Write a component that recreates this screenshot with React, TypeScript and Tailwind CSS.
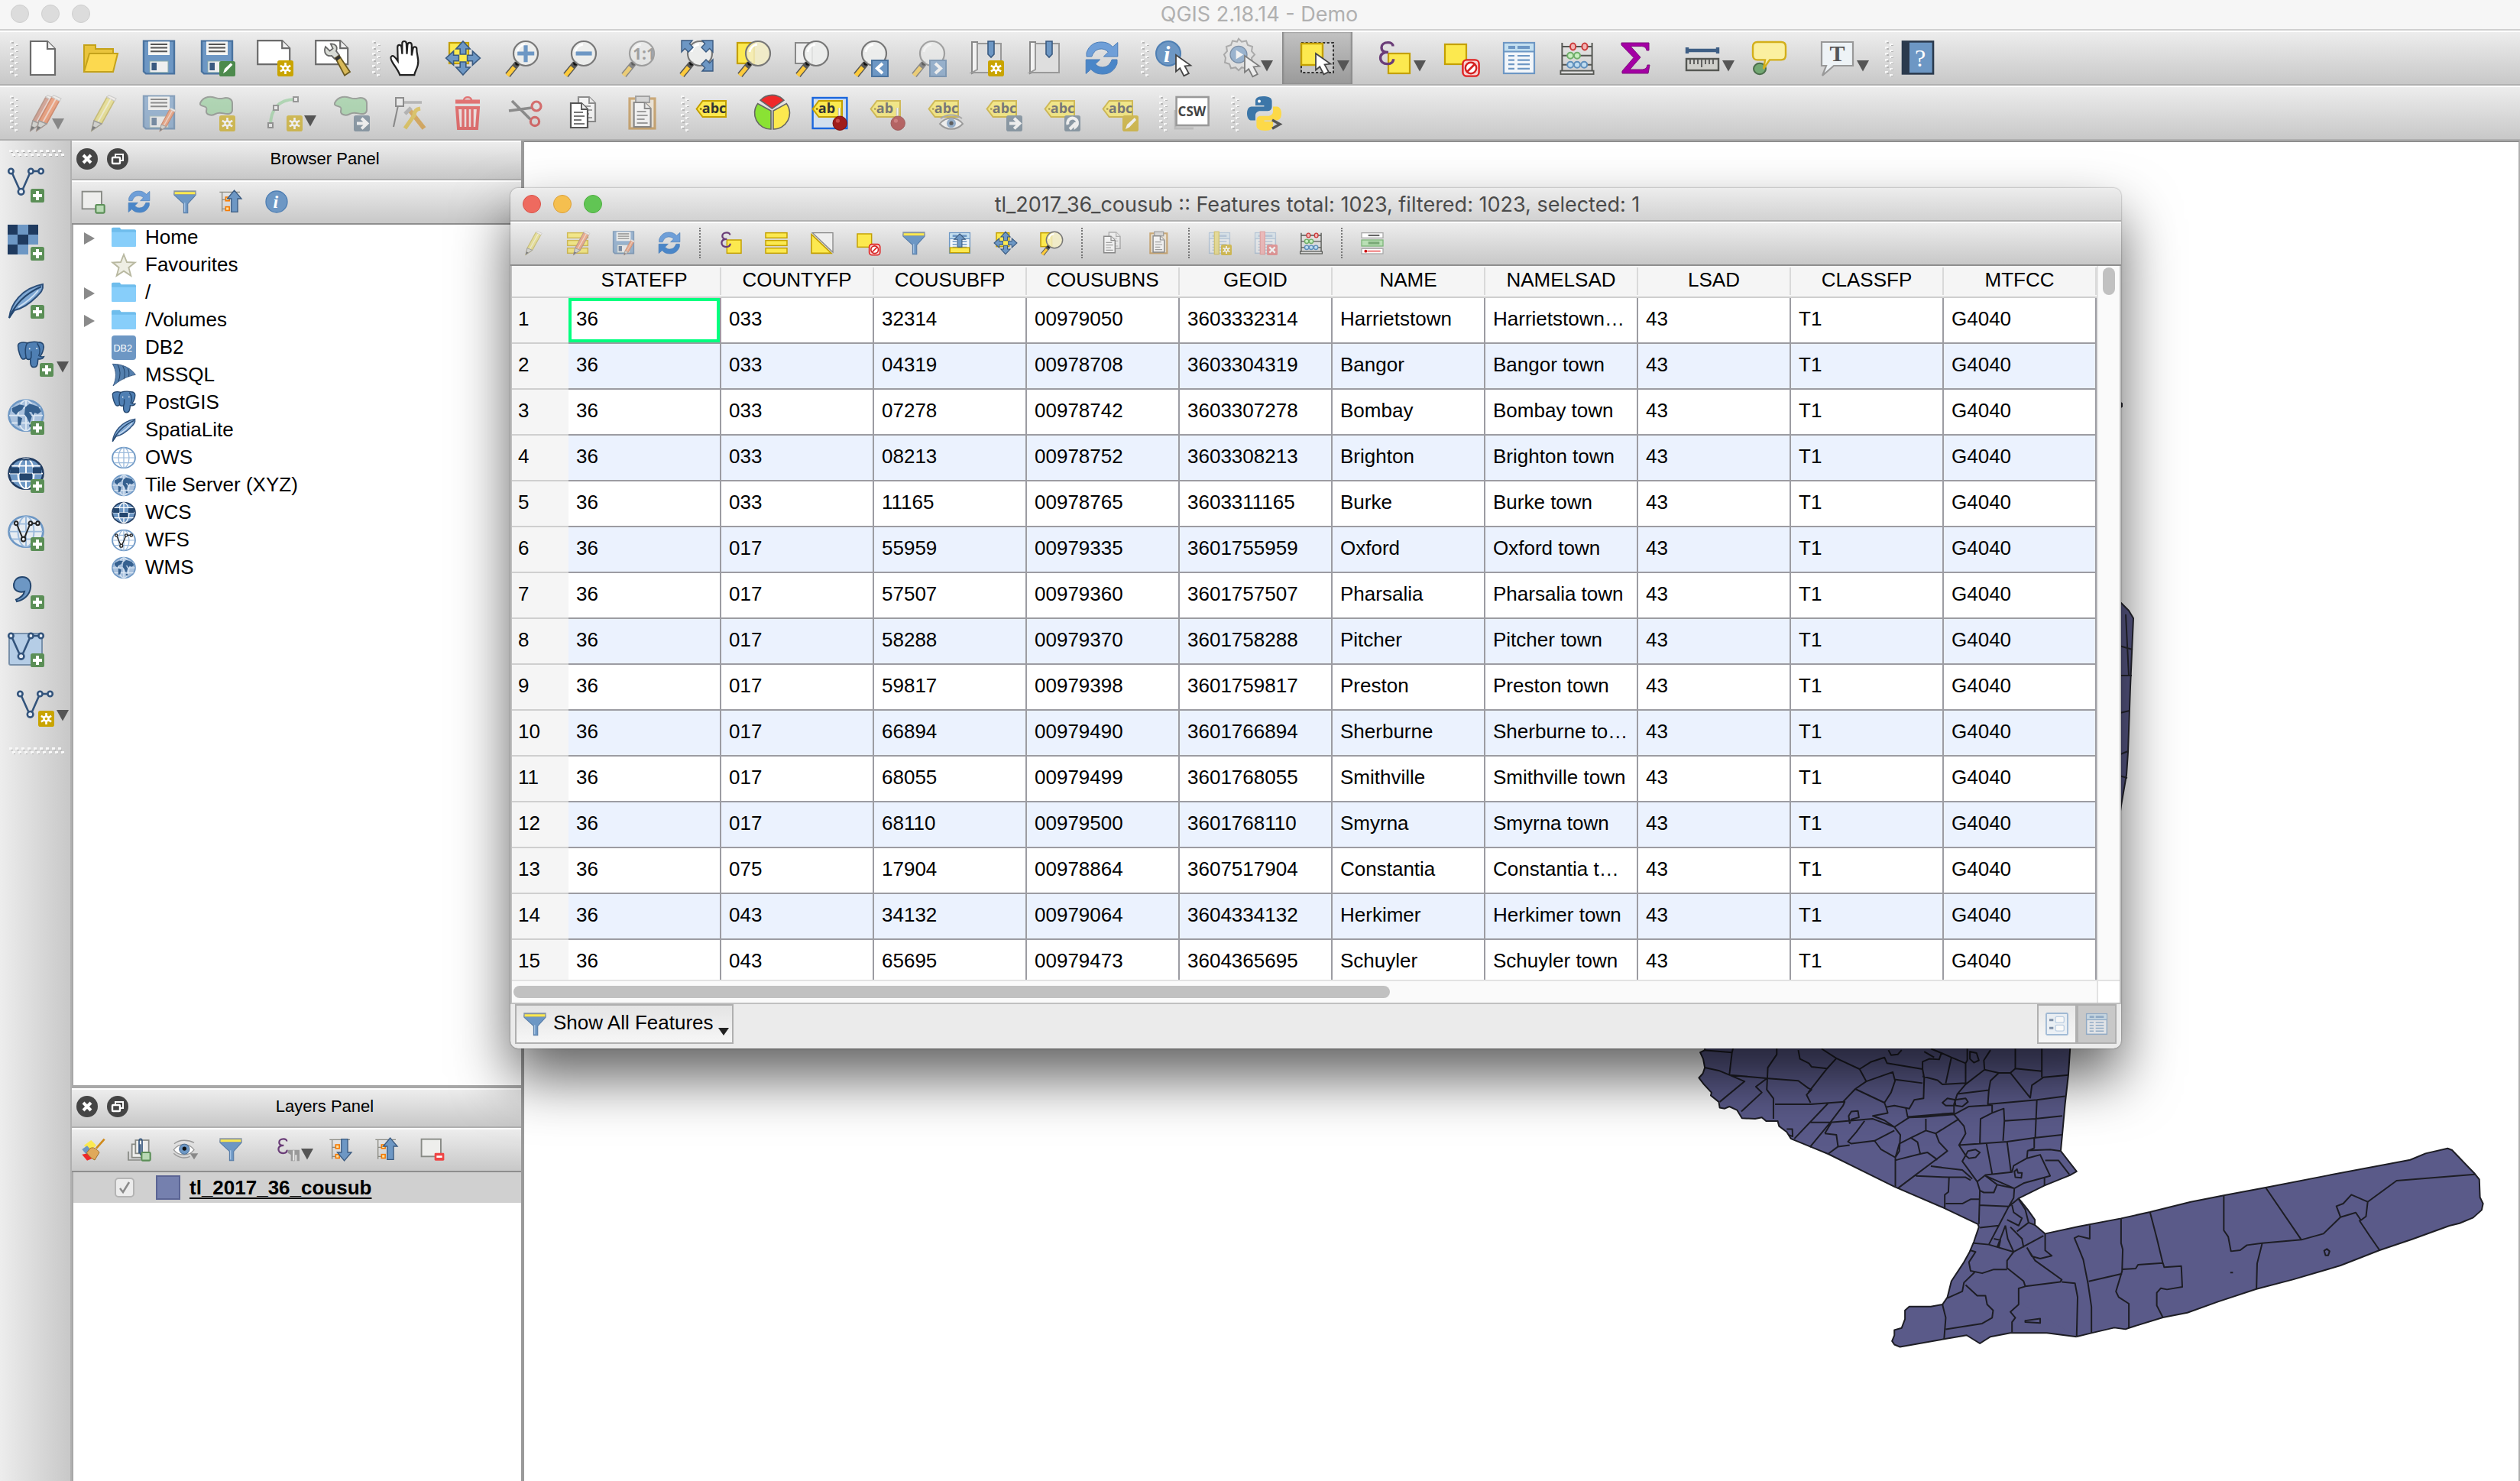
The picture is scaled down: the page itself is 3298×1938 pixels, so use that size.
import React from "react";

type Kids = { children?: React.ReactNode };

/* ---------- icon building blocks, all on a 24-unit grid ---------- */

const STEEL = "#6d97c4";
const NAVY = "#3a5a80";

const Lens = ({ tint = "#eef0ee" }: { tint?: string }) => (
  <g>
    <path d="M9.5 15.5 3.2 23.2" stroke="#555" strokeWidth="4" />
    <path d="M7.5 18 3 23.4" stroke="#fcca3c" strokeWidth="2.6" />
    <circle cx="9.6" cy="15.4" r="1.5" fill="#111" />
    <circle cx="15" cy="9" r="8" fill={tint} fillOpacity=".85" stroke="#777" strokeWidth="1.1" />
    <path d="M9.5 8a6 6 0 0 1 5-5" stroke="#fff" strokeWidth="1.4" fill="none" />
  </g>
);

const Star = ({ x = 13.5, y = 13.5 }: { x?: number; y?: number }) => (
  <g>
    <rect x={x} y={y} width="10.5" height="10.5" rx="1.4" fill="#c9a400" />
    <g stroke="#fff" strokeWidth="1.3">
      <path d={`M${x + 5.25} ${y + 1.5}v7.5M${x + 1.9} ${y + 3.4}l6.7 3.8M${x + 1.9} ${y + 7.2}l6.7-3.8`} />
    </g>
    <circle cx={x + 5.25} cy={y + 5.25} r="2.1" fill="#fff" />
    <circle cx={x + 5.25} cy={y + 5.25} r=".9" fill="#c9a400" />
  </g>
);

const Plus = () => (
  <g>
    <rect x="15" y="14.5" width="9" height="9" rx="1.3" fill="#5b8f57" />
    <path d="M19.5 16v6M16.5 19h6" stroke="#fff" strokeWidth="2" />
  </g>
);

const ArrowBadge = ({ d = "M15.5 18.8h6M18.6 15.4l3.6 3.4-3.6 3.4" }: { d?: string }) => (
  <g>
    <rect x="13.5" y="13.5" width="10.5" height="10.5" rx="1.4" fill="#5a7184" />
    <path d={d} stroke="#fff" strokeWidth="2" fill="none" />
  </g>
);

const Floppy = () => (
  <g>
    <path d="M2 .8h20v21.4H3.5L2 20.8z" fill={STEEL} stroke="#4a739f" strokeWidth="1.2" />
    <rect x="5" y="1.2" width="14" height="8.8" fill="#f5f5f3" />
    <path d="M6.5 3h11M6.5 5.3h11M6.5 7.6h11" stroke="#555" strokeWidth="1" />
    <rect x="6" y="14" width="12" height="7.4" fill="#efefef" stroke="#8aa" strokeWidth=".5" />
    <rect x="7.2" y="15" width="3.3" height="5" fill={NAVY} />
  </g>
);

const Pencil = ({ c = "#e9dd6c", dark = "#b9a83a", x = 0 }: { c?: string; dark?: string; x?: number }) => (
  <g transform={`translate(${x} 0)`}>
    <path d="M4 23.5 5.5 17 14 1.5l5 2.2L10.5 19z" fill={c} stroke={dark} strokeWidth=".8" />
    <path d="M14 1.5 15.2.3l4.8 2.2-1 1.6z" fill="#f6f0ea" stroke="#bbb" strokeWidth=".6" />
    <path d="M8 18 16.5 2.8" stroke="#fff" strokeOpacity=".6" strokeWidth="1" />
    <path d="M4 23.5 5.5 17l5 2z" fill="#cfcfc9" stroke="#777" strokeWidth=".7" />
    <path d="M4 23.5l.7-3 2 .8z" fill="#444" />
  </g>
);

const Cursor = ({ x = 12, y = 10 }: { x?: number; y?: number }) => (
  <path
    transform={`translate(${x} ${y})`}
    d="M0 0v10.8l2.6-2.2 2.6 5 3.2-1.6-2.6-4.8 3.8-.4z"
    fill="#fff"
    stroke="#444"
    strokeWidth=".9"
  />
);

const Nib = ({ children }: Kids) => (
  <g>
    <path d="M.8 9.3 4.8 4H20v10.5H4.8z" fill="#fce94f" stroke="#c4a000" strokeWidth="1" />
    <circle cx="3.6" cy="9.3" r=".7" fill="#8a7400" />
    {children}
  </g>
);

const abc = (t: string) => (
  <text x="4.4" y="12.2" fontSize="9" fontWeight="700" fill="#333" fontFamily="Open Sans, sans-serif">
    {t}
  </text>
);

const Pin = () => (
  <g>
    <path d="M18.2 16.5v-8" stroke="#999" strokeWidth="1.6" />
    <path d="M18.2 14V8.5" stroke="#fff" strokeWidth=".9" />
    <circle cx="18.6" cy="18.6" r="4.6" fill="#a01c1c" stroke="#7c1010" strokeWidth=".5" />
    <circle cx="17.2" cy="17" r="1.3" fill="#c94b4b" />
  </g>
);

const Refresh = () => (
  <g stroke="#4a7db8" strokeWidth=".5">
    <path d="M2 11V8.5C3.6 3.8 7 1.5 11.5 1.5c3.6 0 5.8 1.2 7.6 3.2L22.4 1.8V11h-9.2l3-2.9C14.8 6.6 13.4 6 11.6 6 8.6 6 6.6 7.8 5.4 11z" fill="#6f9fd8" />
    <path d="M22 13v2.5c-1.6 4.7-5 7-9.5 7-3.6 0-5.8-1.2-7.6-3.2L1.6 22.2V13h9.2l-3 2.9c1.4 1.5 2.8 2.1 4.6 2.1 3 0 5-1.8 6.2-5z" fill="#4a86c8" />
  </g>
);

const Globe = ({ fill = "#a9c1dd", line = "#dbe7f3", rim = STEEL }: { fill?: string; line?: string; rim?: string }) => (
  <g fill="none" stroke={line} strokeWidth="1">
    <circle cx="12" cy="12" r="11.2" fill={fill} stroke={rim} strokeWidth="1.4" />
    <ellipse cx="12" cy="12" rx="5.2" ry="11" />
    <path d="M12 1v22M1 12h22M2.6 6.5h18.8M2.6 17.5h18.8" />
  </g>
);

/* Globes are drawn slightly wider than tall. */
const Oblate = ({ children }: Kids) => <g transform="translate(0 1.2) scale(1 .9)">{children}</g>;

const Continents = () => (
  <g fill="#35608f">
    <path d="M3 6.5 8 4l3 .8-1.5 3L7 9.5l-1.5 2L3 9zM6.5 12.5l3 1.5-1 5-1.8.5z" />
    <path d="M11.5 6l3-2.5 5.5 2 2 3.5-2.2 2-2-1-1 2-1.3-2.6-1.6.2 2 3-1.5 5-1.8-4-1.6-2.4z" />
    <circle cx="15" cy="19.5" r="1" />
  </g>
);

const VLine = ({ c = "#33547c" }: { c?: string }) => (
  <g stroke={c} fill="none" strokeWidth="1.3">
    <path d="M3 4.4 7.6 14.6M10 14.6 14.5 4.4M17 3h3.4" />
    <g fill="#e6ecf3">
      <circle cx="2.2" cy="3" r="1.6" />
      <circle cx="8.8" cy="16.4" r="1.9" />
      <circle cx="15.2" cy="3" r="1.6" />
      <circle cx="21.8" cy="3" r="1.6" />
    </g>
  </g>
);

const Feather = () => (
  <g>
    <path d="M1 23C2 14 9 3.5 23 1c.6 4-2 6-4.5 8.5C14.5 13.5 9 17 4.5 18z" fill="#7fa8d4" stroke="#2d4f7a" strokeWidth="1" />
    <path d="M1 23C5 14 11 7.5 22 2.5" fill="none" stroke="#24466e" strokeWidth="1" />
    <path d="M7 16c5-3 9-6 13-11" fill="none" stroke="#cfe0f2" strokeWidth="1" />
  </g>
);

const Elephant = () => (
  <g fill="#4f7fb3" stroke="#24466e" strokeWidth="1">
    <path d="M1 4c0-3 5-3.2 8-2.2C12 .8 16 .6 19 1.2c4 .3 4.8 2.6 3.8 6-.7 2.6-1.6 4.4-2.8 5.4 1 .8 2 .6 3.3.4-.6 1.4-2.6 2.2-5 1.8-.4 2.4.2 6.6-3.4 6.8-3.2.2-3.3-3-3.2-6.8-1.6.8-3 .2-3.8-.8C5 16.5 3.6 14 2.5 11 1.4 8 1 6 1 4z" />
    <path d="M9 1.8C6.8 5 7 9 8 14M17.5 2c3 4 3 7 1.3 10.5M11.7 14.8c1.600-1.800.3-4 .8-6.300" fill="none" />
    <circle cx="11" cy="6.5" r=".6" fill="#fff" stroke="none" />
    <circle cx="17.2" cy="6.3" r=".6" fill="#fff" stroke="none" />
  </g>
);

const Funnel = () => (
  <g>
    <path d="M1.5 3.5h21v2L14.8 14v9h-4V14L1.5 5.5z" fill={STEEL} stroke="#567ba6" strokeWidth=".8" />
    <path d="M1 1h22v4.2H1z" fill="#8794a0" />
    <path d="M2 2.4h20v2.2H2z" fill="#fce94f" />
    <path d="M11.8 13v9" stroke="#a9c6e6" strokeWidth="1" />
  </g>
);

const Tree = ({ up = false }: { up?: boolean }) => (
  <g>
    <path d="M1 2.5h20M3.5 3v18.5M3.5 10h4M3.5 19h4" stroke="#8a8a82" strokeWidth="1" fill="none" />
    <rect x="7" y="7.5" width="3.6" height="3.6" fill="#fce0a0" stroke="#f57900" strokeWidth="1.2" />
    <rect x="7" y="17" width="3.6" height="3.6" fill="#fce0a0" stroke="#f57900" strokeWidth="1.2" />
    <path
      d={up ? "M15.5.8 22.5 9H18.8v13h-6.2V9H8.6z" : "M15.5 23.2 22.5 15H18.8V2h-6.2v13H8.6z"}
      fill={STEEL}
      stroke={NAVY}
      strokeWidth="1"
    />
  </g>
);

const Sheet = () => (
  <g>
    <rect x="2" y="2" width="20" height="20" fill="#f2f6fa" stroke={STEEL} strokeWidth="1.1" />
    <rect x="2.6" y="2.6" width="18.8" height="5" fill="#c3dff0" />
    <path d="M2 7.8h20" stroke={STEEL} />
    <path d="M5 5h4.5M11 5h8" stroke={STEEL} strokeWidth="2" />
    <path d="M5 10.5h4M11 10.5h8M5 13.3h4M11 13.3h8M5 16.1h4M11 16.1h8M5 18.9h4M11 18.9h8" stroke={STEEL} strokeWidth="1.1" />
  </g>
);

const Abacus = () => (
  <g>
    <path d="M2.2 2v19M21.8 2v19M2 4.5h20M2 10.4h20M2 16.4h20" stroke="#555753" strokeWidth="1" fill="none" />
    <rect x="1.2" y="20.3" width="21.6" height="2.2" fill="#ddd" stroke="#555753" strokeWidth=".9" />
    <g fill="#f2b5b5" stroke="#cc3b3b" strokeWidth="1">
      <ellipse cx="9.3" cy="4.5" rx="1.8" ry="2.2" />
      <ellipse cx="17" cy="4.5" rx="1.8" ry="2.2" />
    </g>
    <g fill="#c8efc0" stroke="#6fae69" strokeWidth="1">
      <ellipse cx="7.6" cy="10.4" rx="2" ry="2" />
      <ellipse cx="12" cy="10.4" rx="2" ry="2" />
    </g>
    <g fill="#bfdcf0" stroke="#5f8fbc" strokeWidth="1">
      <ellipse cx="7.6" cy="16.4" rx="2" ry="2" />
      <ellipse cx="12" cy="16.4" rx="2" ry="2" />
      <ellipse cx="16.6" cy="16.4" rx="2" ry="2" />
    </g>
  </g>
);

const Epsilon = () => (
  <path
    d="M11.5 4.2C11.5 2.6 10 1.8 8.3 1.8 5.6 1.8 4 3.3 4 5.2c0 2 1.8 3 4.500 3-3.400 0-5.200 1.300-5.200 3.700 0 2.300 1.800 3.900 4.500 3.900 2.200 0 4-1 4-3.200"
    fill="none"
    stroke="#6a3d78"
    strokeWidth="1.7"
  />
);

const Yellow = ({ x, y, w, h }: { x: number; y: number; w: number; h: number }) => (
  <rect x={x} y={y} width={w} height={h} fill="#fce94f" stroke="#c4a000" strokeWidth="1.1" />
);

const NoEntry = () => (
  <g>
    <rect x="13.2" y="13.2" width="10.6" height="10.6" rx="2.6" fill="#f7d4d4" stroke="#e02020" strokeWidth="1.2" />
    <circle cx="18.5" cy="18.5" r="3.6" fill="#fff" stroke="#d42020" strokeWidth="1.2" />
    <path d="M16 21l5-5" stroke="#d42020" strokeWidth="1.3" />
  </g>
);

const Blob = () => (
  <path
    d="M1 5.5C2.5 2 6 1 9 1.5c3 .6 4 1.6 7 .8 3-.8 6 .3 6 3.2v4.5c0 2.6-3 2.900-5.500 2.200-2.600-.6-4-.6-5.600.4C8.600 14 5 13.200 5 11c0-1.600 1-2.500-1-3.200C2.500 7.300.5 7 1 5.500z"
    fill="#8fcc95"
    stroke="#6d756d"
    strokeWidth="1"
  />
);

const FourArrows = () => (
  <g fill={STEEL} stroke={NAVY} strokeWidth=".8">
    <path d="M12 1l4.6 5h-2.7v3.500h-3.800V6H7.400z" />
    <path d="M12 23l4.600-5h-2.700v-3.500h-3.800V18H7.400z" />
    <path d="M.8 12l5-4.600v2.700h3.400v3.800H5.800v2.700z" />
    <path d="M23.200 12l-5-4.600v2.700h-3.400v3.800h3.400v2.700z" />
  </g>
);

const Page = ({ x = 4, y = 1, w = 16, h = 22 }: { x?: number; y?: number; w?: number; h?: number }) => (
  <g stroke="#6b6b6b" strokeWidth="1.1">
    <path d={`M${x} ${y}h${w - 5}l5 5v${h - 5}h${-w}z`} fill="#fff" />
    <path d={`M${x + w - 5} ${y}v5h5`} fill="#f0f0f0" />
  </g>
);

const Doc = ({ x, y }: { x: number; y: number }) => (
  <g>
    <path d={`M${x} ${y}h7l4 4v12h-11z`} fill="#fff" stroke="#555" strokeWidth="1.1" />
    <path d={`M${x + 7} ${y}v4h4`} fill="#eee" stroke="#555" strokeWidth=".9" />
    <path d={`M${x + 2} ${y + 6}h6M${x + 2} ${y + 8.5}h7M${x + 2} ${y + 11}h5M${x + 2} ${y + 13.5}h7`} stroke="#777" strokeWidth=".9" />
  </g>
);

const Bookmark = () => (
  <g>
    <path d="M3 1.5h3.500v19L3 22z" fill="#f2f2f2" stroke="#888" />
    <path d="M6.500 2.500H22v19H3l3.500-2z" fill="#dedede" stroke="#999" />
    <path d="M13.500 1h4v8.500l-2 2-2-2z" fill={STEEL} stroke={NAVY} strokeWidth=".8" />
  </g>
);

const Column = ({ bar, edge }: { bar: string; edge: string }) => (
  <g>
    <g opacity=".6"><Sheet /></g>
    <rect x="7" y="1" width="4.5" height="22" fill={bar} stroke={edge} strokeWidth="1" />
  </g>
);

const I: Record<string, React.ReactNode> = {
  newFile: <Page />,
  open: (
    <g stroke="#c4a21a" strokeWidth="1">
      <path d="M1 21V3.500h7.500V6H20v4H5z" fill="#e9c43c" />
      <path d="M1 21 4.500 9H23l-3 12z" fill="#fcd94f" />
    </g>
  ),
  save: <Floppy />,
  saveAs: (
    <g>
      <Floppy />
      <rect x="13.5" y="14" width="10.5" height="10" rx="1.3" fill="#4d8a4d" />
      <path d="M16 22l1-3 4-3.800 1.200 1.200L18 20.800z" fill="#fff" />
    </g>
  ),
  newPrint: <g><Page x={0.6} y={0.6} w={21} h={15.5} /><Star /></g>,
  manager: (
    <g>
      <Page x={0.6} y={0.6} w={21} h={15.5} />
      <path d="M7 4.500c-1.500 4 .5 6.600 4 6l2 2 3-2.500-2-2.600c1.200-3-.6-5-3.600-4.700l1.400 3-2 1.600z" fill="#d9dcd6" stroke="#666" strokeWidth=".9" />
      <path d="M13.500 12l2.500-1.500L23 21l-3.500 2.400z" fill="#d8b95a" stroke="#6b5a20" strokeWidth=".9" />
      <path d="M13.200 12.200l2.800-1.900 1 1.600-2.700 2z" fill="#333" />
    </g>
  ),
  hand: (
    <path
      d="M7.500 23c-1-3-3-5.500-4.500-8-1.300-2.200-1.600-4-.8-4.500 1-.7 2.300.6 4 3.200L6 4.500C6 2.500 8.300 2.500 8.600 4.500L9 9V2C9 0 11.600 0 11.700 2L12 9l.4-6c.2-2 2.600-2 2.700 0v7l.8-4.500c.3-1.800 2.500-1.500 2.400.3C18.200 10 20 12 19 16.500 18.500 19 17.200 20.500 16.800 23z"
      transform="translate(1 .5) scale(1.02 .98)"
      fill="#fff"
      stroke="#222"
      strokeWidth="1.1"
    />
  ),
  panSel: <g><Yellow x={3} y={2} w={12.5} h={13.5} /><FourArrows /></g>,
  zoomIn: <g><Lens /><path d="M15 3.600v11M9.600 9h11" stroke={STEEL} strokeWidth="2.6" /></g>,
  zoomOut: <g><Lens /><path d="M9.800 9h10.500" stroke={STEEL} strokeWidth="2.6" /></g>,
  zoomOne: (
    <g>
      <Lens />
      <text x="9" y="12.8" fontSize="10.5" fontWeight="700" fill="#777" fontFamily="Open Sans, sans-serif">1:1</text>
    </g>
  ),
  zoomFull: (
    <g>
      <Lens />
      <g fill={STEEL} stroke={NAVY} strokeWidth=".7">
        <path d="M3 .5h7L8.200 2.600 10.500 5 7.500 8 5.200 5.800 3 8z" />
        <path d="M23.500.5v7.500l-2.200-2.200L19 8l-3-3 2.300-2.400L16.500.5z" />
        <path d="M23.500 20.500h-7l1.800-2.100L16 16l3-3 2.300 2.200 2.200-2.200z" />
      </g>
    </g>
  ),
  zoomSel: <g><Yellow x={1.5} y={2} w={11} h={13.5} /><Lens tint="#f3edc4" /></g>,
  zoomLayer: <g><rect x="1.5" y="2" width="11" height="13.5" fill="#eee" stroke="#888" /><Lens /></g>,
  zoomLast: <g><Lens /><rect x="13.5" y="13.5" width="10.5" height="10.5" fill={STEEL} stroke="#4a739f" /><path d="M20.500 15.500 17 18.800l3.500 3.200" stroke="#fff" strokeWidth="2" fill="none" /></g>,
  zoomNext: <g><Lens /><rect x="13.5" y="13.5" width="10.5" height="10.5" fill={STEEL} stroke="#4a739f" /><path d="M17 15.500l3.500 3.300L17 22" stroke="#fff" strokeWidth="2" fill="none" /></g>,
  newBookmark: <g><Bookmark /><Star /></g>,
  bookmarks: <Bookmark />,
  refresh: <Refresh />,
  identify: (
    <g>
      <circle cx="8.5" cy="9" r="8" fill={STEEL} stroke="#4f7fb3" />
      <text x="5.5" y="14.5" fontSize="15" fontStyle="italic" fontWeight="700" fill="#fff" fontFamily="Liberation Serif, serif">i</text>
      <Cursor x={13.5} y={10} />
    </g>
  ),
  action: (
    <g>
      <path d="M10.500.8l2 2 3-.6 1 2.800 3 1-.5 3 2 2.200-2 2.200.5 3-3 1-1 2.800-3-.6-2 2-2-2-3 .6-1-2.800-3-1 .5-3L1 11.200 3 9l-.5-3 3-1 1-2.800 3 .6z" transform="translate(0 -1.5)" fill="#e4e4e4" stroke="#888" />
      <circle cx="10.5" cy="9.7" r="5.5" fill={STEEL} stroke={NAVY} strokeWidth=".6" />
      <path d="M8.800 6.800v6l4.800-3z" fill="#fff" />
      <Cursor x={14.5} y={10.5} />
    </g>
  ),
  select: (
    <g>
      <rect x="1.5" y="2" width="21" height="19.5" fill="#e4e4e4" fillOpacity=".5" stroke="#333" strokeDasharray="1.6 1.2" />
      <rect x="1.5" y="2.5" width="14" height="14" fill="#fce94f" stroke="#c4a000" strokeWidth="1.2" />
      <Cursor x={11} y={9} />
    </g>
  ),
  selExpr: <g><Yellow x={8.5} y={9} w={14} h={13} /><Epsilon /></g>,
  deselect: <g><Yellow x={1.5} y={3} w={14} h={13} /><NoEntry /></g>,
  table: <Sheet />,
  abacus: <Abacus />,
  sigma: (
    <path d="M3 2h18v5h-1.500C19 5 18 4.300 15.500 4.300H9l6.500 7.200L8.500 19.500h7.500c2.500 0 3.500-1 4-3h1.500L20.500 22H3.500v-1.500l7.500-8.800L3 3.500z" fill="#a400a4" stroke="#7c0f7c" strokeWidth=".5" />
  ),
  measure: (
    <g>
      <path d="M2 7h20M2 5v4M22 5v4" stroke="#3f5f85" strokeWidth="2.2" />
      <rect x="1.5" y="12.5" width="21" height="7.5" fill="#cfcfcb" stroke="#555753" strokeWidth="1.2" />
      <path d="M4 13v3M6.500 13v3M9 13v3M11.500 13v5M14 13v3M16.500 13v3M19 13v3" stroke="#555" strokeWidth=".9" />
    </g>
  ),
  tips: (
    <g>
      <ellipse cx="5.5" cy="19" rx="4" ry="3.6" fill="#73a873" stroke="#4c6e4c" />
      <path d="M4 1.500h15.500c2 0 3 1 3 3V10c0 2-1 3.200-3 3.200H12L8 19l1-5.800H4c-2 0-3-1.200-3-3.200V4.500c0-2 1-3 3-3z" fill="#fbf0a0" stroke="#d3af1a" strokeWidth="1.2" />
    </g>
  ),
  annotation: (
    <g>
      <path d="M2 1.500h20.500V17H10l-7.500 6.500L5 17H2z" fill="#eef3f6" stroke="#999" strokeWidth="1.1" />
      <text x="7.2" y="14.2" fontSize="15" fontWeight="700" fill="#555" fontFamily="Liberation Serif, serif">T</text>
    </g>
  ),
  help: (
    <g>
      <rect x="2" y="1.2" width="20" height="21" fill={STEEL} stroke="#2b3a4d" strokeWidth="1.3" />
      <rect x="2" y="1.2" width="4.5" height="21" fill="#2b3a4d" />
      <text x="10" y="17.5" fontSize="16" fill="#fff" fontFamily="Liberation Serif, serif">?</text>
    </g>
  ),
  pencils: <g><Pencil x={0} c="#c9806a" dark="#a06a55" /><Pencil x={4} c="#ee7c48" dark="#c4572b" /></g>,
  pencil: <Pencil x={2} />,
  saveEdits: <g><Floppy /><g transform="translate(10 8.5) scale(.65)"><Pencil c="#ee8a5a" dark="#c4572b" /></g></g>,
  addFeature: <g><Blob /><Star /></g>,
  addCurve: (
    <g>
      <path d="M3 20C3 10 8 3 19 3" fill="none" stroke="#8fcc95" strokeWidth="2" />
      <g fill="#eee" stroke="#666"><rect x="1.5" y="18.5" width="3" height="3" /><rect x="5" y="7" width="3" height="3" /><rect x="18" y="1.5" width="3" height="3" /></g>
      <Star />
    </g>
  ),
  moveFeature: <g><Blob /><ArrowBadge /></g>,
  nodeTool: (
    <g>
      <path d="M5 5h15" stroke="#999" strokeWidth="1.8" />
      <path d="M4.500 7 1.500 21" stroke="#555" strokeWidth="1" />
      <rect x="3" y="2" width="5" height="5.5" fill="#eee" stroke="#555" />
      <path d="M21.500 22 12 10" stroke="#d08a1a" strokeWidth="3" />
      <path d="M9 22l6-8.500c0-2 1-4 4-4.500" stroke="#d9b424" strokeWidth="2.6" fill="none" />
      <path d="M9 12.500l4-4" stroke="#999" strokeWidth="2.4" />
    </g>
  ),
  trash: (
    <g fill="none" stroke="#e02a2a">
      <path d="M4 4.500h16" strokeWidth="2.6" />
      <path d="M9.500 3.500C9.500 1 14.500 1 14.500 3.500" strokeWidth="1.2" />
      <path d="M5 8.500h14L18 22H6z" strokeWidth="2" fill="#f5dede" />
      <path d="M9 9v12M12 9v12M15 9v12" strokeWidth="1.7" />
    </g>
  ),
  cut: (
    <g fill="none">
      <path d="M1 10.500 16 8.500M3 4l12 12" stroke="#555" strokeWidth="1.8" />
      <circle cx="19" cy="7.5" r="3" stroke="#c22" strokeWidth="1.6" />
      <circle cx="18" cy="17.5" r="2.8" stroke="#c22" strokeWidth="1.6" />
    </g>
  ),
  copy: <g><g opacity=".6"><Doc x={8.5} y={1.5} /></g><Doc x={3.5} y={5.5} /></g>,
  paste: (
    <g>
      <rect x="4" y="2.5" width="16.5" height="19.5" fill="#f0e4cf" stroke="#b98232" strokeWidth="1.6" />
      <rect x="8" y="1" width="9" height="4" fill="#ccc" stroke="#777" />
      <Doc x={6.8} y={5} />
    </g>
  ),
  label: <Nib>{abc("abc")}</Nib>,
  diagram: (
    <g stroke="#666" strokeWidth=".8">
      <path d="M11.500 10.500V22.500A10.500 10.500 0 0 1 2.800 5.800z" fill="#8ae234" />
      <path d="M13 10.500V22.500A10.500 10.500 0 0 0 21.700 5.800z" fill="#fce94f" />
      <path d="M12.250 9 4.500 3.600a10.500 10.500 0 0 1 15.500 0z" fill="#ef2929" />
    </g>
  ),
  pinActive: (
    <g>
      <rect x=".8" y="2" width="22.4" height="20" fill="#d3e0ee" stroke="#1a66dd" strokeWidth="1.2" />
      <Nib>{abc("ab")}<Pin /></Nib>
    </g>
  ),
  pin: <Nib>{abc("ab")}<Pin /></Nib>,
  labelEye: (
    <Nib>
      {abc("abc")}
      <path d="M8 19c4-5 11-5 15 0-4 4.500-11 4.500-15 0z" fill="#fff" stroke="#777" />
      <circle cx="15.5" cy="18.6" r="3" fill={STEEL} />
      <circle cx="15.5" cy="18.6" r="1.3" fill="#111" />
      <path d="M8.500 15.500c4-3 10-3 14 0" stroke="#888" fill="none" />
    </Nib>
  ),
  labelMove: <Nib>{abc("abc")}<ArrowBadge /></Nib>,
  labelRotate: <Nib>{abc("abc")}<ArrowBadge d="M17 22.500l3.500-3.500M15.800 19.500a3.200 3.200 0 1 1 5 1.500v-3" /></Nib>,
  labelEdit: (
    <Nib>
      {abc("abc")}
      <rect x="13.5" y="13.5" width="10.5" height="10.5" rx="1.4" fill="#c9a400" />
      <path d="M15.500 22.500l1-3 5-4.500 1 1.500-4.500 4.800z" fill="#fff" />
    </Nib>
  ),
  csw: (
    <g>
      <path d="M1 10v12h12" fill="none" stroke="#bbb" strokeWidth="1.4" />
      <rect x="1.8" y="1.5" width="21" height="18.5" fill="#fff" stroke="#999" strokeWidth="1.3" />
      <text x="2.8" y="14" fontSize="8.5" fontWeight="700" fill="#444" fontFamily="Open Sans, sans-serif">CSW</text>
    </g>
  ),
  python: (
    <g>
      <path d="M11.500 1c-4 0-5 1.500-5 3.200V7h5.700v.8H4C2 7.800 1 9.800 1 12.200s1 4.600 3 4.600h2.500v-3.200c0-1.800 1.400-3 3.200-3h5c1.600 0 2.600-1.200 2.600-2.800V4.200C17.300 2.200 15.500 1 11.500 1z" fill="#3c76a8" />
      <circle cx="9" cy="4.2" r="1" fill="#fff" />
      <path d="M13 23.500c4 0 5-1.500 5-3.200v-2.800h-5.700v-.8h8.200c2 0 3-2 3-4.400s-1-4.600-3-4.600H18v3.200c0 1.800-1.400 3-3.200 3h-5C8.200 13.900 7.200 15.100 7.200 16.700v3.600c0 2 1.800 3.200 5.800 3.200z" fill="#fdd948" />
      <path d="M17.500 16.500l5 2.800-5 2.800" fill="none" stroke="#555" strokeWidth="1.7" />
    </g>
  ),
  vector: <g><VLine /><Plus /></g>,
  vectorNew: <g><VLine /><Star x={14} y={14} /></g>,
  raster: (
    <g>
      <rect x="0" y="0" width="20" height="19.5" fill={STEEL} />
      <path d="M0 0h6.500v6.500H0zM13.500 0H20v6.500h-6.500zM6.500 6.500h7V13h-7zM0 13h6.500v6.500H0z" fill="#1f3a5f" />
      <path d="M13.500 13h6.500v6.500h-6.500z" fill="#dcdcdc" />
      <Plus />
    </g>
  ),
  featherAdd: <g><Feather /><Plus /></g>,
  feather: <Feather />,
  elephantAdd: <g><g transform="scale(.76 .8)"><Elephant /></g><Plus /></g>,
  elephant: <Elephant />,
  wmsAdd: <g><g transform="scale(1 .9)"><Globe /><Continents /></g><Plus /></g>,
  wms: <Oblate><Globe /><Continents /></Oblate>,
  wcsAdd: (
    <g>
      <g transform="scale(1 .9)">
        <Globe fill={STEEL} line="#fff" rim="#1f3a5f" />
        <path d="M2 7.500h5.500V12H1.500zM16.500 7.500H22V12h-5.500zM8 12h8v5H8zM7 2.500l5-1.500 5 1.500z" fill="#24466e" />
      </g>
      <Plus />
    </g>
  ),
  wcs: (
    <Oblate>
      <Globe fill={STEEL} line="#fff" rim="#1f3a5f" />
      <path d="M2 7h5.500v5H1.500zM16.500 7H22v5h-5.500zM8 12h8v5H8z" fill="#24466e" />
    </Oblate>
  ),
  wfsAdd: <g><g transform="scale(1 .9)"><Globe fill="#e6ecf2" line="#9dbbdc" /></g><g transform="translate(4 3) scale(.72 .78)"><VLine c="#222" /></g><Plus /></g>,
  wfs: <Oblate><Globe fill="#fff" line="#9dbbdc" /><g transform="translate(3 4) scale(.75 .85)"><VLine c="#222" /></g></Oblate>,
  ows: <Oblate><Globe fill="#fff" line="#9dbbdc" /></Oblate>,
  comma: (
    <g>
      <path d="M4 8c0-3.500 2.500-5.500 5.500-5.500 4 0 6 3 5.500 7-.5 4.500-4 8-9 9l-.5-1.200c3-1.200 5-2.800 5.500-5.300C7.500 13 4 11.500 4 8z" fill={STEEL} stroke="#24466e" />
      <Plus />
    </g>
  ),
  virtual: (
    <g>
      <rect x="1" y="1.5" width="21.5" height="20.5" rx="1" fill="#b5cde6" stroke="#7890aa" />
      <VLine />
      <Plus />
    </g>
  ),
  addItem: (
    <g>
      <rect x="1.2" y="2" width="19" height="17" fill="#eeeeec" stroke="#888a85" strokeWidth="1.4" />
      <rect x="14.5" y="15" width="8.5" height="8" rx="1" fill="#b9dab5" stroke="#5b8f57" strokeWidth="1.6" />
    </g>
  ),
  funnel: <Funnel />,
  collapse: <Tree up />,
  expand: <Tree />,
  info: (
    <g>
      <circle cx="12" cy="12" r="10.5" fill={STEEL} stroke="#4f7fb3" />
      <text x="8.7" y="18" fontSize="18" fontStyle="italic" fontWeight="700" fill="#fff" fontFamily="Liberation Serif, serif">i</text>
    </g>
  ),
  folder: (
    <g>
      <path d="M0 3.500c0-1 .5-1.500 1.500-1.500H8l1.500 2h13c1 0 1.500.6 1.500 1.600V10H0z" fill="#6fbdec" />
      <path d="M0 6.500h24v13.500c0 .6-.4 1-1 1H1c-.6 0-1-.4-1-1z" fill="#87cefa" />
    </g>
  ),
  favourite: <path d="M12 1.500l3 7.500 8 .4-6.200 5 2.200 8-7-4.600-7 4.600 2.200-8L1 9.400l8-.4z" fill="#eeeee4" stroke="#b8b8a0" strokeWidth="1.4" />,
  db2: (
    <g>
      <rect width="24" height="24" rx="3" fill={STEEL} />
      <text x="1.8" y="15.5" fontSize="9.5" fill="#fff" fontFamily="Liberation Sans, sans-serif">DB2</text>
    </g>
  ),
  mssql: (
    <g>
      <path d="M1 1c10 0 18 4 22.500 10.500C16 13 9 16 1.500 22.500 5 15 5 8 1 1z" fill="#5580ae" stroke="#2d4f7a" strokeWidth=".6" />
      <path d="M6 1.500c3 5.500 3 11 .5 17M11 3c2.500 4.500 2.500 8.500 1 13M16 5.500c1.500 3 1.500 5 .8 8" stroke="#24466e" strokeWidth=".8" fill="none" />
    </g>
  ),
  broom: (
    <g>
      <path d="M3 8l7-5 5 5-7 6z" fill="#fce94f" />
      <path d="M1 12l5-3.500L11 14l-5 4z" fill={STEEL} />
      <path d="M1 17l6-1 4 5-5 2z" fill="#ef2929" />
      <path d="M23 2l-8 9" stroke="#d08a1a" strokeWidth="2" />
      <path d="M9 11c3-1.500 6 0 9 4l-4.500 7.500C10 21 7 17.500 5.500 15.500z" fill="#e0a95a" stroke="#9a6a22" strokeWidth=".7" />
    </g>
  ),
  addGroup: (
    <g fill="#eeeeec" stroke="#888a85" strokeWidth="1.3">
      <path d="M1.500 14v8.500h12" fill="none" />
      <rect x="5" y="7" width="13" height="13" />
      <rect x="8.5" y="3" width="13" height="13" />
      <path d="M12 16V4c0-3 3-3 3 0v12c0 2-1.800 2-1.800 0V7" fill="none" stroke={NAVY} />
      <rect x="14.5" y="15" width="8.5" height="8" rx="1" fill="#b9dab5" stroke="#5b8f57" strokeWidth="1.6" />
    </g>
  ),
  eye: (
    <g>
      <path d="M1 12.500c5-7 15-7 20 0-5 6.500-15 6.500-20 0z" fill="#fff" stroke="#999" />
      <circle cx="11.5" cy="11.8" r="5" fill={STEEL} stroke={NAVY} strokeWidth=".6" />
      <circle cx="11.5" cy="11.3" r="2" fill="#111" />
      <path d="M1.500 6.500c5-4.500 14-4 19.500-1M1 16c5 5 12 5 16 3" stroke="#999" fill="none" />
      <path d="M17 16h8l-4 6z" fill="#888" />
    </g>
  ),
  exprFilter: (
    <g>
      <Epsilon />
      <path d="M12.500 12.500H24v11h-2.500v-6h-2v6h-4v-6l-3-2z" fill="#999" />
      <path d="M17.500 13v10h1.500V13z" fill="#eee" />
    </g>
  ),
  removeLayer: (
    <g>
      <rect x="1.2" y="2" width="19" height="17" fill="#eeeeec" stroke="#888a85" strokeWidth="1.4" />
      <rect x="14" y="15.5" width="9.5" height="7.5" rx="1" fill="#ef4444" />
      <path d="M16 19.200h5.500" stroke="#fff" strokeWidth="2" />
    </g>
  ),
  multiEdit: <g><Yellow x={2} y={2} w={20} h={5} /><Yellow x={2} y={9.5} w={20} h={5} /><Yellow x={2} y={17} w={20} h={5} /><Pencil x={4} c="#ee8a5a" dark="#a06a55" /></g>,
  selectAll: <g><Yellow x={1.5} y={2} w={21} h={5} /><Yellow x={1.5} y={9.5} w={21} h={5} /><Yellow x={1.5} y={17} w={21} h={5} /></g>,
  invert: (
    <g>
      <path d="M2.500 2h20v19z" fill="#eee" stroke="#888" />
      <path d="M1.500 3.500V22H21z" fill="#fce94f" stroke="#c4a000" strokeWidth="1.2" />
    </g>
  ),
  toTop: (
    <g>
      <Sheet />
      <rect x="2.5" y="16.5" width="19" height="5" fill="#fce94f" stroke="#c4a000" />
      <path d="M12 3l5.500 5.500h-3.300V16H9.800V8.500H6.500z" fill={STEEL} stroke={NAVY} strokeWidth=".8" />
    </g>
  ),
  newColumn: <g><Column bar="#e6d568" edge="#c9b22e" /><Star /></g>,
  deleteColumn: (
    <g>
      <Column bar="#f0a0a0" edge="#dd7f7f" />
      <rect x="13.5" y="13.5" width="10.5" height="10.5" rx="1.4" fill="#e06a6a" />
      <path d="M16 16l5.500 5.500M21.500 16 16 21.500" stroke="#fff" strokeWidth="1.8" />
    </g>
  ),
  conditional: (
    <g>
      <rect x="1.5" y="2" width="21" height="5" fill="#fff" stroke="#aaa" />
      <path d="M8 4.500h11" stroke="#666" strokeWidth="1.6" />
      <rect x="1.5" y="9" width="21" height="6" fill="#b9dfb5" stroke="#7fb87b" />
      <path d="M8 12h11" stroke="#7aa977" strokeWidth="2.6" />
      <rect x="1.5" y="17.5" width="21" height="5" fill="#fff" stroke="#aaa" />
      <path d="M7 20h13" stroke="#f08080" strokeWidth="1.6" />
      <circle cx="5.5" cy="20" r="1.4" fill="#c00" />
    </g>
  ),
  form: (
    <g>
      <rect x="1.5" y="1.5" width="21" height="21" rx="1" fill="#e8f0f8" stroke={STEEL} strokeWidth="1.4" />
      <path d="M4.500 8h4M4.500 16h4" stroke="#35527a" strokeWidth="2.2" />
      <rect x="10.5" y="4.8" width="8.5" height="5.8" rx="1.5" fill="#fff" stroke="#9dbbdc" />
      <rect x="10.5" y="13" width="8.5" height="5.8" rx="1.5" fill="#fff" stroke="#9dbbdc" />
    </g>
  ),
};

/* ---------- toolbar pieces ---------- */

type Size = "lg" | "sm";
const Icon = ({ id, size = "lg", dim = false }: { id: string; size?: Size; dim?: boolean }) => (
  <svg
    viewBox="0 0 24 24"
    aria-hidden="true"
    className={`${size === "lg" ? "size-12" : "size-8"} shrink-0 overflow-visible ${dim ? "opacity-60" : ""}`}
  >
    {I[id]}
  </svg>
);

const Caret = ({ dim = false }: { dim?: boolean }) => (
  <svg viewBox="0 0 16 16" aria-hidden="true" className={`size-4 shrink-0 ${dim ? "opacity-60" : ""}`}>
    <path d="M0 1h16L8 15.500z" fill="#555" />
  </svg>
);

const BAR = "border-b-2 border-[#b0b0b0] bg-linear-to-b from-[#ededed] to-[#c8c8c8]";

type Item = [id: string, label: string, kind?: "" | "dim" | "menu" | "dimmenu" | "active" | "overlap"];

const Tool = ({ item: [id, label, kind = ""] }: { item: Item }) => {
  if (id === "|")
    return (
      <svg viewBox="0 0 12 48" aria-hidden="true" className="ml-2 -mr-[10px] h-12 w-3 shrink-0">
        {[0, 1, 2, 3, 4, 5].map((n) => (
          <g key={n}>
            <path d={`M1 ${n * 8 + 1}h4v3h-4zM7 ${n * 8 + 5}h4v3h-4z`} fill="#f6f6f6" />
            <path d={`M3 ${n * 8 + 3}h3v2h-3zM9 ${n * 8 + 7}h3v1h-3z`} fill="#b5b5b5" />
          </g>
        ))}
      </svg>
    );
  const menu = kind === "menu" || kind === "dimmenu" || kind === "active";
  const dim = kind === "dim" || kind === "dimmenu" || kind === "overlap";
  return (
    <button
      aria-label={label}
      className={`flex h-full shrink-0 items-center ${menu ? "w-[92px] gap-0.5 pl-[22px]" : "relative w-[68px] justify-center"} ${
        kind === "active" ? "bg-linear-to-b from-[#c2c2c2] to-[#9a9a9a] shadow-[inset_2px_0_2px_#888,inset_-2px_0_2px_#888]" : ""
      }`}
    >
      <Icon id={id} dim={dim} />
      {menu && <span className="pt-5"><Caret /></span>}
      {kind === "overlap" && <span className="absolute right-1.5 bottom-3"><Caret dim /></span>}
    </button>
  );
};

const MAIN: Item[] = [
  ["|", ""],
  ["newFile", "New"], ["open", "Open"], ["save", "Save"], ["saveAs", "Save As"], ["newPrint", "New Print Composer"], ["manager", "Composer Manager"],
  ["|", ""],
  ["hand", "Pan Map"], ["panSel", "Pan Map to Selection"], ["zoomIn", "Zoom In"], ["zoomOut", "Zoom Out"], ["zoomOne", "Zoom to Native Resolution", "dim"],
  ["zoomFull", "Zoom Full"], ["zoomSel", "Zoom to Selection"], ["zoomLayer", "Zoom to Layer"], ["zoomLast", "Zoom Last"], ["zoomNext", "Zoom Next", "dim"],
  ["newBookmark", "New Bookmark"], ["bookmarks", "Show Bookmarks"], ["refresh", "Refresh"],
  ["|", ""],
  ["identify", "Identify Features"], ["action", "Run Feature Action", "dimmenu"], ["select", "Select Features", "active"], ["selExpr", "Select by Expression", "menu"],
  ["deselect", "Deselect Features"], ["table", "Open Attribute Table"], ["abacus", "Field Calculator"], ["sigma", "Statistical Summary"],
  ["measure", "Measure", "menu"], ["tips", "Map Tips"], ["annotation", "Text Annotation", "menu"],
  ["|", ""],
  ["help", "Help Contents"],
];

const EDIT: Item[] = [
  ["|", ""],
  ["pencils", "Current Edits", "overlap"], ["pencil", "Toggle Editing", "dim"], ["saveEdits", "Save Layer Edits", "dim"], ["addFeature", "Add Feature", "dim"],
  ["addCurve", "Add Circular String", "dimmenu"], ["moveFeature", "Move Feature", "dim"], ["nodeTool", "Node Tool", "dim"], ["trash", "Delete Selected", "dim"],
  ["cut", "Cut Features", "dim"], ["copy", "Copy Features"], ["paste", "Paste Features", "dim"],
  ["|", ""],
  ["label", "Layer Labeling Options"], ["diagram", "Layer Diagram Options"], ["pinActive", "Highlight Pinned Labels"], ["pin", "Pin Labels", "dim"],
  ["labelEye", "Show/Hide Labels", "dim"], ["labelMove", "Move Label", "dim"], ["labelRotate", "Rotate Label", "dim"], ["labelEdit", "Change Label", "dim"],
  ["|", ""],
  ["csw", "MetaSearch"],
  ["|", ""],
  ["python", "Python Console"],
];

const SIDE: [string, string, boolean?][] = [
  ["vector", "Add Vector Layer"], ["raster", "Add Raster Layer"], ["featherAdd", "Add SpatiaLite Layer"], ["elephantAdd", "Add PostGIS Layers", true],
  ["wmsAdd", "Add WMS Layer"], ["wcsAdd", "Add WCS Layer"], ["wfsAdd", "Add WFS Layer"], ["comma", "Add Delimited Text Layer"],
  ["virtual", "Add Virtual Layer"], ["vectorNew", "New Shapefile Layer", true],
];

const SideGrip = () => (
  <svg viewBox="0 0 72 10" aria-hidden="true" className="ml-3 h-2.5 w-[72px] shrink-0">
    {[0, 1, 2, 3, 4, 5, 6, 7, 8].map((n) => (
      <g key={n}>
        <path d={`M${n * 8} 0h4v3h-4zM${n * 8 + 4} 5h4v3h-4z`} fill="#f8f8f8" />
        <path d={`M${n * 8 + 2} 3h3v1h-3zM${n * 8 + 6} 8h2v1h-2z`} fill="#aaa" />
      </g>
    ))}
  </svg>
);

const PanelTitle = ({ title }: { title: string }) => (
  <header className={`flex h-[52px] shrink-0 items-center border-t-2 border-t-white pb-1 pl-1.5 ${BAR}`}>
    <button aria-label={`Close ${title}`} className="size-7">
      <svg viewBox="0 0 28 28" className="size-7"><circle cx="14" cy="14" r="14" fill="#454545" /><path d="M9 9l10 10M19 9 9 19" stroke="#fff" strokeWidth="4" /></svg>
    </button>
    <button aria-label={`Float ${title}`} className="ml-3 size-7">
      <svg viewBox="0 0 28 28" className="size-7">
        <circle cx="14" cy="14" r="14" fill="#454545" />
        <path d="M11 11V8h10v8h-3" fill="none" stroke="#fff" strokeWidth="2" />
        <rect x="7" y="12" width="10" height="8" rx="1" fill="none" stroke="#fff" strokeWidth="2.4" />
      </svg>
    </button>
    <h2 className="flex-1 text-center text-[22px] leading-7">{title}</h2>
  </header>
);

const SmallTool = ({ id, label, dim = false }: { id: string; label: string; dim?: boolean }) => (
  <button aria-label={label} className="size-8 shrink-0"><Icon id={id} size="sm" dim={dim} /></button>
);

const TREE: [string, string, boolean?][] = [
  ["folder", "Home", true], ["favourite", "Favourites"], ["folder", "/", true], ["folder", "/Volumes", true], ["db2", "DB2"], ["mssql", "MSSQL"],
  ["elephant", "PostGIS"], ["feather", "SpatiaLite"], ["ows", "OWS"], ["wms", "Tile Server (XYZ)"], ["wcs", "WCS"], ["wfs", "WFS"], ["wms", "WMS"],
];

/* ---------- attribute data ---------- */

const COLS = ["STATEFP", "COUNTYFP", "COUSUBFP", "COUSUBNS", "GEOID", "NAME", "NAMELSAD", "LSAD", "CLASSFP", "MTFCC"];
const ROWS: [string, string, string, string][] = [
  ["033", "32314", "00979050", "Harrietstown"],
  ["033", "04319", "00978708", "Bangor"],
  ["033", "07278", "00978742", "Bombay"],
  ["033", "08213", "00978752", "Brighton"],
  ["033", "11165", "00978765", "Burke"],
  ["017", "55959", "00979335", "Oxford"],
  ["017", "57507", "00979360", "Pharsalia"],
  ["017", "58288", "00979370", "Pitcher"],
  ["017", "59817", "00979398", "Preston"],
  ["017", "66894", "00979490", "Sherburne"],
  ["017", "68055", "00979499", "Smithville"],
  ["017", "68110", "00979500", "Smyrna"],
  ["075", "17904", "00978864", "Constantia"],
  ["043", "34132", "00979064", "Herkimer"],
  ["043", "65695", "00979473", "Schuyler"],
];

/* ---------- map drawing ---------- */

const MapCanvas = () => (
  <svg viewBox="686 186 2611 1752" preserveAspectRatio="xMinYMin slice" className="size-full" role="img" aria-label="Map of tl_2017_36_cousub">
    <g fill="#5a5a89" stroke="#26262e" strokeWidth="2" strokeLinejoin="round">
      <path d="M2760 784l16 5 10 10 6 10-4 90-3 85-2 30-7 40-3 22-3 6-10 2z" />
      <path d="M2770 884h20M2770 934l17-4M2770 989l15-6M2770 844l21 6M2782 804l4 80M2770 1014l14 4" fill="none" />
      <path d="M2774 526l3 2v4l-3 2z" />
    </g>
    <g transform="translate(2180 1200) scale(.43367 .38270)">
      <path
        fill="#5a5a89"
        d="M118 420V455L104 463 113 485 118 515 112 535 100 550 115 572 138 600 136 610 160 632 163 652 178 655 192 648 215 660 230 688 270 690 290 685 303 698 338 698 342 715 365 735 378 758 440 787 490 810 690 922 840 995 942 1050 945 1060 930 1110 917 1145 900 1180 862 1245 850 1300 835 1325 800 1332 735 1332 722 1345 722 1375 712 1405 690 1412 690 1430 683 1450 690 1462 707 1470 840 1443 908 1430 948 1458 980 1435 1040 1422 1150 1422 1240 1435 1145 1083 1114 1053 1114 1035 1092 1000 1065 962 1143 918 1220 883 1240 870 1192 800 1197 740 1205 640 1215 540 1222 420Z"
      />
      <g transform="translate(968.5 522.7) scale(1.0267 .871)">
        <path fill="#5a5a89" d="M172 643 270 615 395 583 480 558 600 518 700 492 820 462 1000 415 1245 353 1290 328 1355 308 1368 315 1435 408 1448 430 1450 500 1459 525 1455 550 1430 580 1390 602 1360 612 1250 665 1155 708 1040 768 900 823 793 860 680 910 590 953 518 972 418 1013 408 1018 375 1012 308 1033 265 1047 80 900Z" />
        <g fill="none" stroke="#1d1d24" strokeWidth="2" strokeLinejoin="round">
          <path vectorEffect="non-scaling-stroke" d="M172 643 270 615 395 583 480 558 600 518 700 492 820 462 1000 415 1245 353 1290 328 1355 308 1368 315 1435 408 1448 430 1450 500 1459 525 1455 550 1430 580 1390 602 1360 612 1250 665 1155 708 1040 768 900 823 793 860 680 910 590 953 518 972 418 1013 408 1018 375 1012 308 1033 265 1047" />
          <path vectorEffect="non-scaling-stroke" d="M395 583V680L400 705 398 790 380 870 388 892 418 918V1013M480 558 500 660 518 760M398 783 438 780 445 765 518 758 522 775 572 770 575 852 530 862 512 857 500 875V925L518 972M300 830 398 800M303 610V663L270 652 258 660 272 705 284 745 298 840 308 930V1033M697 492V630L710 655 718 712 745 708 765 688 810 680 925 667 820 462M810 680 795 760 793 860M925 667 990 643 1040 578 1085 560 1100 590 1115 575 1120 518 1205 435 1435 410M1040 578 1028 535 1048 525 1072 490 1120 518M1095 590 1125 650 1155 708M992 710 1000 703 1008 712 1004 728 996 728ZM716 796h8" />
        </g>
      </g>
      <g fill="none" stroke="#1d1d24" strokeWidth="2" strokeLinejoin="round">
        <path vectorEffect="non-scaling-stroke" d="M118 420V455L104 463 113 485 118 515 112 535 100 550 115 572 138 600 136 610 160 632 163 652 178 655 192 648 215 660 230 688 270 690 290 685 303 698 338 698 342 715 365 735 378 758 440 787 490 810 690 922 840 995 942 1050 945 1060 930 1110 917 1145 900 1180 862 1245 850 1300 835 1325 800 1332 735 1332 722 1345 722 1375 712 1405 690 1412 690 1430 683 1450 690 1462 707 1470 840 1443 908 1430 948 1458 980 1435 1040 1422 1150 1422 1240 1435" />
        <path vectorEffect="non-scaling-stroke" d="M1222 420 1215 540 1205 640 1197 740 1192 800 1240 870 1220 883 1143 918 1065 962 1092 1000 1114 1035 1114 1053 1145 1083" />
        <path vectorEffect="non-scaling-stroke" d="M115 455 200 463 205 440M200 463 192 540M118 515 160 525 192 540 310 552 400 560 430 585 440 590 425 608 437 635M335 440V470L308 515 305 590 325 620V690M192 540 238 562 163 632M305 552 272 580 290 600 228 665M330 640 437 640 540 632 535 645 497 702 435 787M437 702 497 702 625 690 690 718 708 745 705 800 693 822V922M490 637 388 758M400 455 405 485 432 500 440 512 487 518 515 483 470 450M487 518 430 600M515 483 585 520 605 562 572 588 535 632M585 520 620 495 660 480 668 500 775 520 780 550 778 620 750 625 735 655 690 645 665 650 660 635 572 588M605 562 685 530 692 560 680 600 660 635M672 455 680 472 700 470 712 455M690 555 775 568M775 520 775 495 795 485 825 487 832 465 800 450M780 460 810 480M832 465 862 480 905 500 910 490V450M862 480 845 568M775 545 800 552 820 558 835 572 905 568V500M918 460 938 465 945 490 930 498 918 485ZM980 455 960 490 962 522 905 572 880 605 870 640V670L730 683 725 655M665 650 670 670 625 680 660 695 690 718 735 685 785 683 870 675M880 605 975 592 980 560 1005 533 962 522M1005 533 1040 533 1100 618 1105 575 1140 548 1215 540M1135 450V548M1055 450V518L1135 527M1040 533 1055 518M975 592 972 640 1120 625 1205 613M1120 625 1115 755M985 640V670L950 690 948 775M985 670 1020 655 1022 697 1115 690 1197 680M1022 697 1018 765M885 780 1030 768 1112 755 1195 745M1112 755V790L1092 800 1090 825 1050 850 1045 872 965 882 940 905 895 835 905 815 885 780 905 740 900 715 870 675 915 648 985 643M968 775 985 878M1030 768 1042 872M1092 798 1160 795 1192 800M1090 825 1130 813 1160 885 1080 910 1052 928 965 885M1145 832 1185 832 1218 880M1143 890V918M1052 870 1060 862 1063 875 1075 875 1073 892 1055 890ZM835 635 850 620 875 625 870 645 845 645ZM872 625 905 620 912 632 895 648 875 645ZM552 680 560 665 580 663 583 685 560 692 555 705ZM600 697 575 735 550 768 560 775 630 765 690 730M630 765 650 795 693 822 705 775 740 755 785 730 785 690M740 755 760 770 768 810 705 828 693 832M785 730 815 740 885 690M815 740 825 770 850 800 700 928M768 810 790 805 820 830M480 740 515 745 520 785 490 810M520 785 555 780M500 702 480 740M365 725 382 725 383 750 370 745M800 852 895 865 925 895M755 885 855 890 905 890 920 900M855 890 853 940 842 950V995M845 980 895 980 920 965 945 965M905 815 912 800 935 795 948 805 935 822 915 825ZM940 905 948 935 945 1050M948 935 960 942 990 942 1000 915 965 885M1000 915 1052 928 1050 960 1035 990 945 985M948 1062 1005 1055 1035 990 1065 962M1005 1055 975 1120 930 1115M975 1120 1050 1145 1140 1090M1025 1055 1000 1130M1025 1055 1032 1100 1050 1145M1040 1060 1075 1100 1080 1130M1045 985 1050 1010 1075 1030 1065 1055 1030 1035M1065 965 1085 1000 1095 1045 1060 1075M1114 1053 1095 1045M990 1100 1010 1105 1005 1130M1145 1083V1140L1165 1158 1130 1168 1105 1160 1090 1130M1090 1130 1115 1175 1195 1240 1190 1248 1085 1263 1080 1245 1030 1200 1030 1175 1050 1145M920 1140 935 1145 915 1180 920 1210 955 1218 990 1205 1030 1205M932 1215 900 1250 895 1280 850 1303M905 1258 940 1295 965 1295 970 1325 988 1345 985 1370 955 1390 845 1410M835 1325 845 1370 840 1443M1195 1248 1235 1252 1243 1300 1240 1435M1085 1263 1065 1270V1325L1040 1350 1055 1370 1045 1385 1045 1420M1085 1380 1130 1373V1388L1085 1385Z" />
      </g>
    </g>
  </svg>
);

/* ---------- attribute table window ---------- */

const Sep = () => <span className="-mx-[5px] h-10 w-0.5 shrink-0 border-l-2 border-dotted border-[#777]" />;

const TableWindow = () => (
  <section
    aria-label="Attribute table"
    className="absolute top-[246px] right-[522px] left-[668px] flex flex-col overflow-hidden rounded-[10px] bg-[#ebebeb] shadow-[0_0_2px_rgba(0,0,0,0.5),0_38px_74px_rgba(0,0,0,0.62)]"
  >
    <header className="flex h-11 items-center border-b-2 border-[#b0b0b0] bg-linear-to-b from-[#ededed] to-[#d2d2d2] px-4">
      <div className="flex gap-4">
        <button aria-label="Close" className="size-6 rounded-full border border-[#d9544b] bg-[#ee6a5f]" />
        <button aria-label="Minimize" className="size-6 rounded-full border border-[#dba03a] bg-[#f5bf4f]" />
        <button aria-label="Zoom" className="size-6 rounded-full border border-[#4fae42] bg-[#61c554]" />
      </div>
      <h2 className="flex-1 pt-0.5 pr-[100px] text-center font-[Inter,sans-serif] text-[27px] leading-8 text-[#4a4a4a]">
        tl_2017_36_cousub :: Features total: 1023, filtered: 1023, selected: 1
      </h2>
    </header>
    <div className="flex h-[58px] items-center gap-7 border-y-2 border-t-white border-b-[#8e8e8e] bg-linear-to-b from-[#ededed] to-[#c8c8c8] pb-0.5 pl-3">
      <SmallTool id="pencil" label="Toggle editing mode" dim />
      <SmallTool id="multiEdit" label="Toggle multi edit mode" dim />
      <SmallTool id="saveEdits" label="Save edits" dim />
      <SmallTool id="refresh" label="Reload the table" />
      <Sep />
      <SmallTool id="selExpr" label="Select features using an expression" />
      <SmallTool id="selectAll" label="Select all" />
      <SmallTool id="invert" label="Invert selection" />
      <SmallTool id="deselect" label="Unselect all" />
      <SmallTool id="funnel" label="Filter/Select features using form" />
      <SmallTool id="toTop" label="Move selection to top" />
      <SmallTool id="panSel" label="Pan map to selected rows" />
      <SmallTool id="zoomSel" label="Zoom map to selected rows" />
      <Sep />
      <SmallTool id="copy" label="Copy selected rows" dim />
      <SmallTool id="paste" label="Paste features" dim />
      <Sep />
      <SmallTool id="newColumn" label="New field" dim />
      <SmallTool id="deleteColumn" label="Delete field" dim />
      <SmallTool id="abacus" label="Open field calculator" />
      <Sep />
      <SmallTool id="conditional" label="Conditional formatting" />
    </div>
    <div className="flex border-x-2 border-b-2 border-[#c0c0c0] bg-[#fafafa]">
      <div className="min-w-0 flex-1">
        <table className="w-full table-fixed border-separate border-spacing-0 text-[26px] leading-8">
          <thead>
            <tr className="h-[42px] bg-[#f5f5f5]">
              <th className="w-[74px] border-b-2 border-[#cfcfcf]" />
              {COLS.map((c) => (
                <th key={c} scope="col" className="border-b-2 border-[#cfcfcf] p-0 font-normal">
                  <div className="border-r-2 border-[#d9d9d9] pb-1">{c}</div>
                </th>
              ))}
            </tr>
          </thead>
          <tbody>
            {ROWS.map(([county, sub, ns, name], i) => {
              const last = i === ROWS.length - 1;
              const line = last ? "h-[52px]" : "h-[60px] border-b-2";
              const cells = ["36", county, sub, ns, `36${county}${sub}`, name, `${name} town`, "43", "T1", "G4040"];
              return (
                <tr key={sub} className={i % 2 ? "bg-[#ebf2fe]" : "bg-white"}>
                  <th scope="row" className={`border-[#cfcfcf] bg-[#f5f5f5] p-0 pt-[11px] pl-2 text-left align-top font-normal ${line}`}>{i + 1}</th>
                  {cells.map((v, j) => (
                    <td
                      key={j}
                      className={`truncate border-r-2 border-[#9c9ca2] p-0 pt-[11px] pr-2.5 pl-2.5 align-top ${line} ${
                        i === 0 && j === 0 ? "shadow-[inset_0_0_0_4px_#00ff7f]" : ""
                      }`}
                    >
                      {v}
                    </td>
                  ))}
                </tr>
              );
            })}
          </tbody>
        </table>
        <div className="flex h-[30px] items-center border-t-2 border-[#e2e2e2] px-0.5"><div className="h-4 w-[55.4%] rounded-full bg-[#c1c1c1]" /></div>
      </div>
      <div className="flex w-[30px] flex-col border-l-2 border-[#e2e2e2]">
        <div className="flex flex-1 justify-center pt-0.5"><div className="h-9 w-4 rounded-full bg-[#c1c1c1]" /></div>
        <div className="h-[30px] border-t-2 border-[#e2e2e2] bg-white" />
      </div>
    </div>
    <footer className="flex h-[58px] items-start justify-between pr-1.5 pl-1.5">
      <button className="flex h-[52px] items-center border-2 border-[#b0b0b0] bg-linear-to-b from-[#e4e4e4] to-[#f6f6f6] pr-1 pl-2 text-[26px] leading-8">
        <Icon id="funnel" size="sm" />
        <span className="pb-1 pl-2">Show All Features</span>
        <svg viewBox="0 0 14 10" aria-hidden="true" className="mt-5 ml-1.5 h-2.5 w-3.5"><path d="M0 0h14L7 10z" fill="#222" /></svg>
      </button>
      <div className="flex">
        <button aria-label="Switch to form view" className="flex h-[52px] w-[52px] items-center justify-center border-2 border-[#b0b0b0] bg-linear-to-b from-[#e8e8e8] to-[#f6f6f6]"><Icon id="form" size="sm" dim /></button>
        <button aria-label="Switch to table view" aria-pressed="true" className="flex h-[52px] w-[52px] items-center justify-center border-2 border-[#b0b0b0] bg-[#c8c8c8]"><Icon id="table" size="sm" dim /></button>
      </div>
    </footer>
  </section>
);

export default function App() {
  return (
    <div className="relative flex h-screen flex-col overflow-hidden bg-white font-['Liberation_Sans',Arial,sans-serif] text-[26px] text-black">
      <header className="relative flex h-10 shrink-0 items-center border-b-2 border-[#d0d0d0] bg-[#f6f6f6] pl-3.5">
        <div className="flex gap-4 pb-0.5">
          <button aria-label="Close window" className="size-6 rounded-full border border-[#cfcfcf] bg-[#dcdcdc]" />
          <button aria-label="Minimize window" className="size-6 rounded-full border border-[#cfcfcf] bg-[#dcdcdc]" />
          <button aria-label="Zoom window" className="size-6 rounded-full border border-[#cfcfcf] bg-[#dcdcdc]" />
        </div>
        <h1 className="flex-1 pr-[120px] text-center font-[Inter,sans-serif] text-[27px] leading-8 text-[#b0b0b0]">QGIS 2.18.14 - Demo</h1>
      </header>
      <nav aria-label="Main toolbar" className={`flex h-[72px] shrink-0 gap-2 border-t-2 border-t-white pl-1 [&>svg]:self-center ${BAR}`}>
        {MAIN.map((it, i) => <Tool key={i} item={it} />)}
      </nav>
      <nav aria-label="Editing toolbar" className={`flex h-[72px] shrink-0 gap-2 border-t-2 border-t-white pl-1 [&>svg]:self-center ${BAR}`}>
        {EDIT.map((it, i) => <Tool key={i} item={it} />)}
      </nav>
      <div className="flex min-h-0 flex-1">
        <nav aria-label="Layer toolbar" className="flex w-[94px] shrink-0 flex-col border-r-2 border-[#b0b0b0] bg-linear-to-r from-[#ededed] to-[#c8c8c8] pt-3">
          <SideGrip />
          <div className="flex flex-col gap-7 pt-3 pb-7">
            {SIDE.map(([id, label, menu]) => (
              <button key={id} aria-label={label} className={`flex h-12 items-center ${menu ? "gap-1 pl-[22px]" : "pl-2.5"}`}>
                <Icon id={id} />
                {menu && <span className="pt-5"><Caret /></span>}
              </button>
            ))}
          </div>
          <SideGrip />
        </nav>
        <aside className="flex w-[592px] shrink-0 flex-col border-r-4 border-[#9a9a9a]">
          <PanelTitle title="Browser Panel" />
          <div className="flex h-[58px] shrink-0 items-center gap-7 border-y-2 border-t-white border-b-[#8e8e8e] bg-linear-to-b from-[#ededed] to-[#c8c8c8] pb-0.5 pl-3">
            <SmallTool id="addItem" label="Add Selected Layers" />
            <SmallTool id="refresh" label="Refresh browser" />
            <SmallTool id="funnel" label="Filter Browser" />
            <SmallTool id="collapse" label="Collapse All" />
            <SmallTool id="info" label="Enable/disable properties widget" />
          </div>
          <ul className="h-[1130px] shrink-0 border-b-4 border-l-2 border-[#a8a8a8] bg-white">
            {TREE.map(([id, label, branch]) => (
              <li key={label} className="flex h-9 items-center pb-1 pl-3.5">
                <svg viewBox="0 0 14 16" aria-hidden="true" className="mt-1 h-4 w-3.5">{branch && <path d="M0 0v16l14-8z" fill="#8a8a8a" />}</svg>
                <span className="mt-0.5 ml-[22px]"><Icon id={id} size="sm" /></span>
                <span className="pl-3 leading-8">{label}</span>
              </li>
            ))}
          </ul>
          <PanelTitle title="Layers Panel" />
          <div className="flex h-[58px] shrink-0 items-center gap-7 border-y-2 border-t-white border-b-[#8e8e8e] bg-linear-to-b from-[#ededed] to-[#c8c8c8] pb-0.5 pl-3">
            <SmallTool id="broom" label="Open the layer styling dock" />
            <SmallTool id="addGroup" label="Add Group" />
            <SmallTool id="eye" label="Manage Layer Visibility" />
            <SmallTool id="funnel" label="Filter Legend by Map Content" />
            <button aria-label="Filter Legend by Expression" className="-mr-2 ml-3.5 flex items-center gap-0.5">
              <Icon id="exprFilter" size="sm" />
              <span className="pt-3"><Caret /></span>
            </button>
            <SmallTool id="expand" label="Expand All" />
            <SmallTool id="collapse" label="Collapse all layers" />
            <SmallTool id="removeLayer" label="Remove Layer/Group" />
          </div>
          <div className="flex-1 border-l-2 border-[#a8a8a8] bg-white">
            <label className="flex h-10 items-center bg-[#d0d0d0] pl-[54px]">
              <input type="checkbox" defaultChecked className="peer absolute size-[26px] appearance-none" />
              <svg viewBox="0 0 26 26" aria-hidden="true" className="size-[26px]">
                <rect x="1" y="1" width="24" height="24" rx="4" fill="#ececec" stroke="#b4b4b4" strokeWidth="2" />
                <path d="M7 14l4 5 8-13" fill="none" stroke="#8a8a8a" strokeWidth="2.5" />
              </svg>
              <span className="ml-7 size-8 border-2 border-[#5b6494] bg-[#7580ae]" />
              <span className="pl-3 font-bold underline decoration-2 underline-offset-4">tl_2017_36_cousub</span>
            </label>
          </div>
        </aside>
        <main className="min-w-0 flex-1 border-t-2 border-r-2 border-t-[#8e8e8e] border-r-[#b0b0b0] bg-white">
          <MapCanvas />
        </main>
      </div>
      <TableWindow />
    </div>
  );
}
